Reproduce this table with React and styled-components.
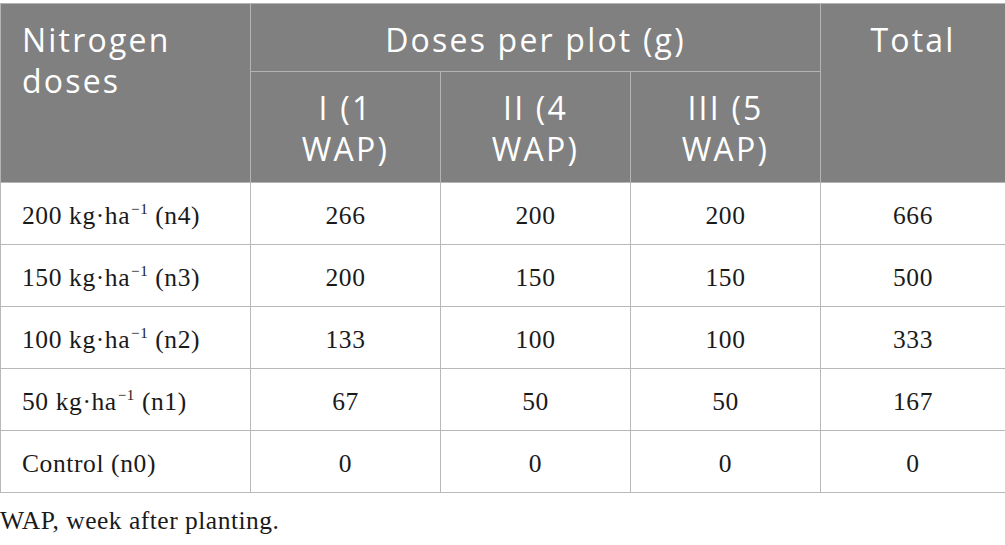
import React from 'react';
import styled, { createGlobalStyle } from 'styled-components';

const GlobalStyle = createGlobalStyle`
    html, body {
        margin: 0;
        padding: 0;
        background: #ffffff;
    }
`;

const Page = styled.div`
    width: 1005px;
    padding-top: 3px;
`;

const Table = styled.table`
    width: 1005px;
    border-collapse: collapse;
    table-layout: fixed;
    border: 1px solid #b4b4b4;
`;

const HeadCell = styled.th`
    background: #808080;
    color: #ffffff;
    font-family: 'Open Sans', 'DejaVu Sans', sans-serif;
    font-weight: 400;
    font-size: 32px;
    letter-spacing: 2.2px;
    line-height: 41px;
    text-align: ${(p) => (p.$left ? 'left' : 'center')};
    vertical-align: top;
    padding: 15px 10px 0 ${(p) => (p.$left ? '21px' : '10px')};
    border: 1px solid #b4b4b4;
    height: ${(p) => p.$h}px;
    box-sizing: border-box;
    white-space: nowrap;
`;

const Cell = styled.td`
    font-family: 'Liberation Serif', 'Times New Roman', serif;
    font-size: 25.5px;
    letter-spacing: 0.6px;
    color: #1a1a1a;
    text-align: ${(p) => (p.$left ? 'left' : 'center')};
    vertical-align: middle;
    padding: 4px 0 0 ${(p) => (p.$left ? '21px' : '0')};
    height: 62px;
    box-sizing: border-box;
    border: 1px solid #b8b8b8;
    white-space: nowrap;
`;

const Sup = styled.sup`
    font-size: 15px;
    vertical-align: 10px;
    line-height: 0;
    margin: 0 0 0 1px;
`;

const Caption = styled.p`
    margin: 13px 0 0 0;
    font-family: 'Liberation Serif', 'Times New Roman', serif;
    font-size: 25.5px;
    letter-spacing: 0.5px;
    color: #1a1a1a;
`;

const rows = [
    { n: '200', tag: 'n4', v: ['266', '200', '200', '666'] },
    { n: '150', tag: 'n3', v: ['200', '150', '150', '500'] },
    { n: '100', tag: 'n2', v: ['133', '100', '100', '333'] },
    { n: '50', tag: 'n1', v: ['67', '50', '50', '167'] },
];

export default function App() {
    return (
        <Page>
            <GlobalStyle />
            <Table>
                <colgroup>
                    <col style={{ width: 250 }} />
                    <col style={{ width: 190 }} />
                    <col style={{ width: 190 }} />
                    <col style={{ width: 190 }} />
                    <col style={{ width: 185 }} />
                </colgroup>
                <thead>
                    <tr>
                        <HeadCell rowSpan={2} $left $h={68}>
                            Nitrogen
                            <br />
                            doses
                        </HeadCell>
                        <HeadCell colSpan={3} $h={68}>
                            Doses per plot (g)
                        </HeadCell>
                        <HeadCell rowSpan={2} $h={68}>
                            Total
                        </HeadCell>
                    </tr>
                    <tr>
                        <HeadCell $h={111}>
                            I (1
                            <br />
                            WAP)
                        </HeadCell>
                        <HeadCell $h={111}>
                            II (4
                            <br />
                            WAP)
                        </HeadCell>
                        <HeadCell $h={111}>
                            III (5
                            <br />
                            WAP)
                        </HeadCell>
                    </tr>
                </thead>
                <tbody>
                    {rows.map((r) => (
                        <tr key={r.tag}>
                            <Cell $left>
                                {r.n} kg·ha<Sup>−1</Sup> ({r.tag})
                            </Cell>
                            {r.v.map((x, i) => (
                                <Cell key={i}>{x}</Cell>
                            ))}
                        </tr>
                    ))}
                    <tr>
                        <Cell $left>Control (n0)</Cell>
                        <Cell>0</Cell>
                        <Cell>0</Cell>
                        <Cell>0</Cell>
                        <Cell>0</Cell>
                    </tr>
                </tbody>
            </Table>
            <Caption>WAP, week after planting.</Caption>
        </Page>
    );
}
